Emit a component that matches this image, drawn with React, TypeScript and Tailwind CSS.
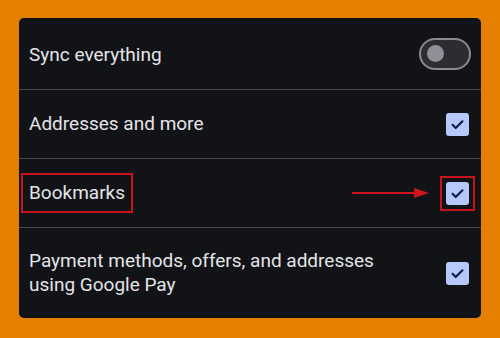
const Checkbox = () => (
  <div className="w-[23px] h-[23px] rounded-[3px] bg-[#b6c9fa] flex items-center justify-center">
    <svg viewBox="0 0 24 24" className="w-[17px] h-[17px]" fill="none" stroke="#0f1d45" strokeWidth={3} strokeLinecap="round" strokeLinejoin="round">
      <path d="M5 12.5l4.5 4.5L19 7.5" />
    </svg>
  </div>
)

const Toggle = () => (
  <div className="w-[52px] h-[32px] rounded-full border-2 border-[#8a8b90] bg-[#2c2d31] flex items-center pl-[6px]">
    <div className="w-[17px] h-[17px] rounded-full bg-[#8f8f98]" />
  </div>
)

export default function App() {
  return (
    <div className="w-[500px] h-[338px] bg-[#e47f00] pt-[18px] px-[19px] font-['Roboto',sans-serif]">
      <div className="bg-[#121317] rounded-[5px] h-[300px] flex flex-col text-[19px] text-[#e4e4e7]">
        <div className="h-[72px] flex items-center justify-between pl-[10px] pr-[10px] border-b border-[#48494d]">
          <span className="pt-[4px]">Sync everything</span>
          <Toggle />
        </div>
        <div className="h-[69px] flex items-center justify-between pl-[10px] pr-[12px] border-b border-[#48494d]">
          <span>Addresses and more</span>
          <Checkbox />
        </div>
        <div className="h-[69px] flex items-center justify-between pl-[10px] pr-[12px] border-b border-[#48494d]">
          <span className="relative">
            Bookmarks
            <span className="absolute left-[-8px] right-[-8px] top-[-6px] bottom-[-6px] border-2 border-[#c8141c]" />
          </span>
          <div className="flex items-center">
            <svg width="78" height="12" viewBox="0 0 78 12" className="mr-[16px]">
              <line x1="0" y1="6" x2="64" y2="6" stroke="#d0141c" strokeWidth={2} />
              <path d="M62 1L77 6L62 11Z" fill="#d0141c" />
            </svg>
            <div className="relative">
              <Checkbox />
              <span className="absolute left-[-6px] right-[-6px] top-[-6px] bottom-[-6px] border-2 border-[#c8141c]" />
            </div>
          </div>
        </div>
        <div className="flex-1 flex items-center justify-between pl-[10px] pr-[12px]">
          <span className="leading-[24px]">
            Payment methods, offers, and addresses
            <br />
            using Google Pay
          </span>
          <Checkbox />
        </div>
      </div>
    </div>
  )
}
